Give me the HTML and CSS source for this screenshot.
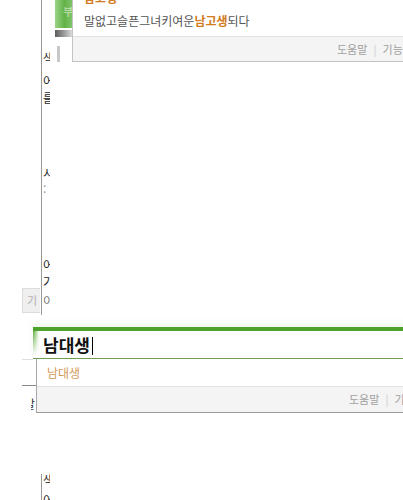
FILE: index.html
```html
<!DOCTYPE html>
<html lang="ko">
<head>
    <meta charset="UTF-8">
    <meta name="viewport" content="width=device-width, initial-scale=1.0">
    <title>검색어 자동완성</title>
    <link rel="stylesheet" href="styles.css">
</head>
<body>

<div class="shot shot-top">
    <div class="gutter">
        <div class="tab">기</div>
    </div>
    <div class="strip">
        <div class="frag f1">색</div>
        <div class="frag f2">어</div>
        <div class="frag f3">를</div>
        <div class="frag f4">시</div>
        <div class="frag f5">:</div>
        <div class="frag f6">어</div>
        <div class="frag f7">가</div>
        <div class="frag f8">이</div>
    </div>
    <div class="tools">
        <div class="btn-green"><span>부</span></div>
        <div class="btn-bar"></div>
        <div class="btn-stub"></div>
    </div>
    <div class="suggest suggest-top">
        <ul class="list">
            <li class="item cut"><b>남고생</b></li>
            <li class="item">말없고슬픈그녀키여운<b>남고생</b>되다</li>
        </ul>
        <div class="foot">도움말 <span class="sep">|</span> 기능끄기</div>
    </div>
</div>

<div class="shot shot-bottom">
    <div class="gutter gutter-low">
        <div class="rule rule-light"></div>
        <div class="rule rule-dark"></div>
        <div class="sliver">알</div>
    </div>
    <div class="main">
        <div class="searchbox">남대생<span class="caret"></span></div>
        <div class="suggest suggest-low">
            <ul class="list">
                <li class="item hint">남대생</li>
            </ul>
            <div class="foot">도움말 <span class="sep">|</span> 기능끄기</div>
        </div>
        <div class="strip strip-low">
            <div class="frag f9">색</div>
            <div class="frag f10">어</div>
        </div>
    </div>
</div>

</body>
</html>
```

FILE: styles.css
```css
body {
    margin: 0;
    width: 403px;
    height: 500px;
    overflow: hidden;
    background: #fff;
    font-family: "Noto Sans CJK KR", "Liberation Sans", sans-serif;
    color: #333;
}

ul {
    margin: 0;
    padding: 0;
    list-style: none;
}

.shot {
    display: flex;
    align-items: flex-start;
}

.shot-top {
    height: 320px;
}

.shot-bottom {
    height: 180px;
}

/* page behind the dropdowns */
.gutter {
    width: 41px;
    height: 315px;
    flex: none;
    display: flex;
    flex-direction: column;
    justify-content: flex-end;
}

.tab {
    width: 18px;
    height: 25px;
    margin: 0 0 2px 22px;
    padding-left: 4px;
    box-sizing: border-box;
    background: #efefef;
    border: 1px solid #dcdcdc;
    border-right: none;
    color: #b0b0b0;
    font-size: 11px;
    line-height: 23px;
    overflow: hidden;
}

.strip {
    width: 14px;
    height: 315px;
    flex: none;
    box-sizing: border-box;
    border-left: 1px solid #999;
}

.frag {
    width: 7px;
    height: 12px;
    margin-left: 1px;
    overflow: hidden;
    font-size: 12px;
    line-height: 12px;
    color: #222;
    white-space: nowrap;
}

.f1 { margin-top: 52px; }
.f2 { margin-top: 11px; }
.f3 { margin-top: 5px; }
.f4 { margin-top: 63px; }
.f5 { margin-top: 4px; color: #999; }
.f6 { margin-top: 64px; }
.f7 { margin-top: 5px; }
.f8 { margin-top: 7px; color: #777; }

.tools {
    width: 17px;
    flex: none;
}

.btn-green {
    height: 28px;
    background: linear-gradient(to right, #9ad586, #62b247 55%, #80c46a);
    overflow: hidden;
}

.btn-green span {
    display: block;
    padding: 3px 0 0 8px;
    color: rgba(255, 255, 255, 0.6);
    font-size: 11px;
    white-space: nowrap;
}

.btn-bar {
    height: 7px;
    margin-top: 2px;
    background: linear-gradient(to right, #5c5c5c, #a4a4a4 60%, #dadada);
}

.btn-stub {
    width: 3px;
    height: 16px;
    margin: 9px 0 0 2px;
    background: #c8c8c8;
}

/* autocomplete layer */
.suggest {
    flex: none;
    background: #fff;
    border: 1px solid #c4c4c4;
    border-top: none;
}

.suggest-top {
    width: 358px;
}

.item {
    padding-left: 11px;
    font-size: 12px;
    color: #555;
    white-space: nowrap;
}

.item b {
    color: #d27c1e;
}

.item.cut {
    height: 6px;
    overflow: hidden;
}

.item.cut b {
    display: block;
    margin-top: -11px;
    line-height: 18px;
}

.suggest-top .item:not(.cut) {
    height: 30px;
    line-height: 30px;
}

.foot {
    height: 24px;
    padding-right: 8px;
    background: #f4f4f4;
    border-top: 1px solid #e2e2e2;
    color: #a0a0a0;
    font-size: 11px;
    line-height: 24px;
    text-align: right;
    white-space: nowrap;
}

.sep {
    padding: 0 3px;
    color: #ccc;
}

/* lower shot */
.gutter-low {
    width: 33px;
    height: auto;
    display: block;
}

.rule {
    margin-left: 22px;
    height: 1px;
}

.rule-light {
    margin-top: 39px;
    background: #dedede;
}

.rule-dark {
    width: 14px;
    margin-top: 25px;
    background: #8a8a8a;
}

.sliver {
    width: 4px;
    margin: 12px 0 0 31px;
    overflow: hidden;
    font-size: 12px;
    line-height: 12px;
    direction: rtl;
    color: #333;
}

.main {
    width: 420px;
    flex: none;
}

.searchbox {
    height: 27px;
    margin-top: 7px;
    padding-left: 10px;
    border-top: 4px solid #4ea22b;
    border-bottom: 1px solid #6e9e55;
    background:
        linear-gradient(to bottom, rgba(255, 255, 255, 0), #fff 90%),
        linear-gradient(to right, #5aab38 0, #a6d392 3px, #e6f3df 5px, #fff 7px);
    box-shadow: 0 -4px 6px rgba(140, 190, 110, 0.12);
    color: #111;
    font-size: 17px;
    font-weight: bold;
    line-height: 27px;
}

.caret {
    display: inline-block;
    width: 1px;
    height: 18px;
    margin-left: 2px;
    vertical-align: -3px;
    background: #000;
}

.suggest-low {
    width: 406px;
    margin-left: 3px;
    border-color: #a8a8a8;
    border-bottom-color: #999;
}

.item.hint {
    height: 27px;
    padding-left: 10px;
    line-height: 27px;
    color: #d29a58;
}

.suggest-low .foot {
    height: 25px;
    line-height: 25px;
}

.strip-low {
    height: 86px;
    margin-left: 8px;
}

.f9 { margin-top: 61px; }
.f10 { margin-top: 8px; }
```
